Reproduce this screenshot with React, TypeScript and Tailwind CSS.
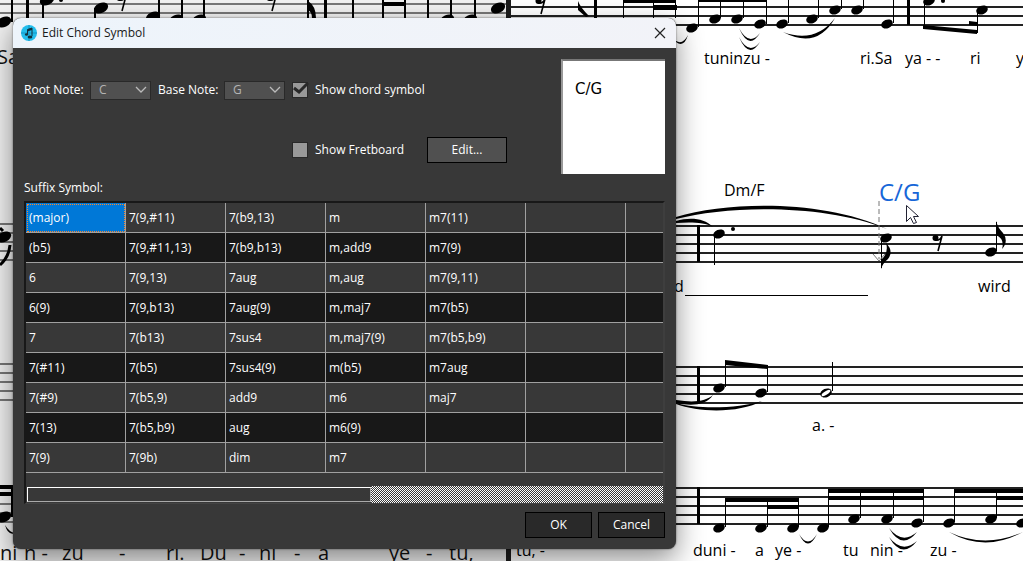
import type { ReactNode } from "react";

const SUFFIX_ROWS: string[][] = [
  ["(major)", "7(9,#11)", "7(b9,13)", "m", "m7(11)"],
  ["(b5)", "7(9,#11,13)", "7(b9,b13)", "m,add9", "m7(9)"],
  ["6", "7(9,13)", "7aug", "m,aug", "m7(9,11)"],
  ["6(9)", "7(9,b13)", "7aug(9)", "m,maj7", "m7(b5)"],
  ["7", "7(b13)", "7sus4", "m,maj7(9)", "m7(b5,b9)"],
  ["7(#11)", "7(b5)", "7sus4(9)", "m(b5)", "m7aug"],
  ["7(#9)", "7(b5,9)", "add9", "m6", "maj7"],
  ["7(13)", "7(b5,b9)", "aug", "m6(9)", ""],
  ["7(9)", "7(9b)", "dim", "m7", ""],
];

const NOTES = ["C", "D", "E", "F", "G", "A", "B"];

// [x, y] of each filled note head
const HEADS: [number, number][] = [
  [692, 28], [715, 19], [737, 19], [760, 24], [782, 24], [812, 19], [835, 10], [857, 10], [887, 24], [929, 1], [982, 10],
  [719, 234], [886, 238], [991, 252],
  [719, 388], [761, 393],
  [719, 528], [761, 528], [793, 528], [823, 528], [854, 519], [887, 519], [917, 523], [949, 523], [991, 519], [1022, 523],
];

const LARGE_HEADS: [number, number][] = [
  [4, 22], [47, 0], [101, 8], [153, 17], [176, 20], [199, 20], [447, 20], [470, 20], [498, 8], [4, 237], [4, 517],
];

// [x, y1, y2, width]
const STEMS: [number, number, number, number][] = [
  [698, 0, 27, 1], [720, 0, 18, 1], [743, 0, 18, 1], [766, 0, 24, 1], [788, 0, 23, 1], [818, 0, 18, 1], [841, 0, 9, 1], [863, 0, 9, 1], [893, 0, 23, 1],
  [907, 0, 25, 3], [924, 0, 28, 1], [977, 10, 33, 1],
  [697, 225, 262, 3], [714, 235, 265, 1], [881, 240, 268, 1], [996, 222, 251, 1],
  [697, 366, 403, 3], [725, 362, 387, 1], [767, 366, 392, 1], [832, 362, 391, 1],
  [697, 487, 524, 3], [725, 499, 527, 1], [767, 499, 527, 1], [798, 499, 527, 1], [828, 489, 527, 1], [860, 489, 518, 1], [893, 489, 518, 1], [923, 489, 522, 1], [954, 489, 522, 1], [996, 489, 518, 1],
  [11, 0, 22, 2], [26, 0, 18, 3], [42, 0, 18, 2], [94, 8, 18, 2], [158, 0, 18, 2], [181, 0, 18, 2], [203, 0, 18, 2], [307, 0, 18, 2], [324, 0, 18, 3],
  [352, 0, 18, 2], [382, 0, 18, 2], [404, 0, 18, 2], [427, 0, 18, 2], [450, 0, 18, 2], [474, 0, 18, 2], [594, 0, 18, 3], [623, 0, 18, 1], [653, 0, 18, 1], [675, 0, 18, 1],
  [11, 485, 517, 2],
];

const BEAMS = [
  "M383 2h23v4h-23z",
  "M623 0h52v3h-52zM653 5h24v5h-24z",
  "M698 0h68v2h-68z",
  "M923 25l54 5v4l-54-5zM969 21l8 1v4l-8-1z",
  "M725 360l43 5v4l-43-4z",
  "M725 498h74v4h-74zM767 505h32v4h-32z",
  "M828 489h96v4h-96zM828 496h96v4h-96z",
  "M954 489h69v4h-69zM996 496h27v4h-27z",
  "M0 485h12v4h-12zM0 492h12v4h-12z",
];

const SLURS = [
  "M676 41Q683 45 688 35Q684 48 676 42z",
  "M739 28Q749 47 760 33Q749 51 739 28z",
  "M739 37Q749 56 760 42Q749 60 739 37z",
  "M783 32Q815 44 835 18Q817 50 783 32z",
  "M676 217C730 201 825 200 887 229C825 204 730 205 676 219z",
  "M676 221C690 217 704 218 713 227C704 222 690 222 676 223z",
  "M676 400C695 403 706 401 713 395C706 406 690 406 676 403z",
  "M676 403C700 410 740 408 762 401C740 413 700 413 676 404z",
  "M799 534Q808 549 817 534Q808 553 799 534z",
  "M889 528Q902 545 917 532Q902 551 889 528z",
  "M889 537Q902 554 917 541Q902 560 889 537z",
  "M949 532Q985 549 1023 532Q985 553 949 532z",
  "M5 525Q9 532 15 533Q8 536 5 525z",
];

const LYRICS: [number, number, string][] = [
  [704, 64, "tuninzu -"], [860, 64, "ri.Sa"], [905, 64, "ya - -"], [970, 64, "ri"], [1016, 64, "y"],
  [674, 292, "d"], [978, 292, "wird"],
  [812, 431, "a. -"],
  [693, 556, "duni -"], [755, 556, "a"], [775, 556, "ye -"], [843, 556, "tu"], [870, 556, "nin -"], [930, 556, "zu -"],
  [516, 556, "tu, -"],
];

const LARGE_LYRICS: [number, number, string][] = [
  [-3, 64, "Sa"], [0, 560, "ni"], [24, 560, "n -"], [62, 560, "zu"], [119, 560, "-"], [166, 560, "ri."], [200, 560, "Du"],
  [239, 560, "-"], [259, 560, "ni"], [294, 560, "-"], [318, 560, "a"], [389, 560, "ye"], [426, 560, "-"], [449, 560, "tu,"],
];

function Staff({ x, y, width, color }: { x: number; y: number; width: number; color: string }) {
  return (
    <g fill={color}>
      {[0, 9, 18, 27, 36].map((offset) => (
        <rect key={offset} x={x} y={y + offset} width={width} height="2" />
      ))}
    </g>
  );
}

function EighthRest({ x, y }: { x: number; y: number }) {
  return (
    <g transform={`translate(${x} ${y})`}>
      <circle cx="2.5" cy="3" r="3" />
      <path d="M2 5q5 1 7-4l-4 15" fill="none" stroke="#000" strokeWidth="1.6" />
    </g>
  );
}

function Score() {
  return (
    <svg aria-hidden="true" className="absolute top-0 left-0" width="1023" height="561" viewBox="0 0 1023 561">
      <rect width="509" height="561" fill="#f1f1f1" />
      <Staff x={0} y={-24} width={508} color="#777777" />
      <Staff x={0} y={223} width={14} color="#777777" />
      <Staff x={0} y={363} width={14} color="#777777" />
      <Staff x={0} y={485} width={14} color="#777777" />
      <rect x="506" width="5" height="561" fill="#1c1c1c" />
      <Staff x={511} y={-12} width={512} color="#222222" />
      <Staff x={676} y={225} width={347} color="#222222" />
      <Staff x={676} y={366} width={347} color="#222222" />
      <Staff x={676} y={487} width={347} color="#222222" />

      {STEMS.map(([x, y1, y2, width]) => (
        <rect key={`${x}-${y1}`} x={x} y={y1} width={width} height={y2 - y1} />
      ))}
      {HEADS.map(([x, y]) => (
        <ellipse key={`${x}-${y}`} cx={x} cy={y} rx="6" ry="4.3" transform={`rotate(-22 ${x} ${y})`} />
      ))}
      {LARGE_HEADS.map(([x, y]) => (
        <ellipse key={`${x}-${y}`} cx={x} cy={y} rx="7.5" ry="5" transform={`rotate(-25 ${x} ${y})`} />
      ))}
      {[...BEAMS, ...SLURS].map((d) => (
        <path key={d} d={d} />
      ))}
      <ellipse cx="826" cy="393" rx="6" ry="4.3" transform="rotate(-22 826 393)" />
      <ellipse cx="826" cy="393" rx="5" ry="1.8" transform="rotate(-32 826 393)" fill="#fff" />
      <circle cx="733" cy="229" r="2" />
      <circle cx="943" cy="1" r="2" />
      <circle cx="61" cy="0" r="2" />

      {/* flags */}
      <path d="M881 269v-9q8-7 5-17q8 8 2 16q-5 4-7 10zM996 221q2 7 7 12q6 8-1 16q3-10-6-14z" />
      <path d="M578 1q2 6 11 15l-3 1-8-7zM308 1q8 5 8 17h-4q0-6-4-8z" />
      <path d="M0 228l3 3M10 245q-1 12-10 20" fill="none" stroke="#000" strokeWidth="3" />
      <EighthRest x={933} y={235} />
      <EighthRest x={117} y={-5} />
      <EighthRest x={267} y={-5} />
      <EighthRest x={536} y={-2} />

      {/* anchor line of the selected chord */}
      <path d="M879 201v58" stroke="#777" strokeDasharray="5 3" />
      <path d="M873 254l6 7l6-7" fill="none" stroke="#777" />
      <path d="M685 295.500h183" stroke="#000" />

      <g fontFamily="'Open Sans', 'Noto Sans', sans-serif" fontSize="16">
        {LYRICS.map(([x, y, text]) => (
          <text key={`${x}-${y}`} x={x} y={y}>{text}</text>
        ))}
        <text x="724" y="196">Dm/F</text>
        <text x="879" y="201" fontSize="24" fill="#1766d8">C/G</text>
      </g>
      <g fontFamily="'Open Sans', 'Noto Sans', sans-serif" fontSize="20" fill="#111">
        {LARGE_LYRICS.map(([x, y, text]) => (
          <text key={`${x}-${y}`} x={x} y={y}>{text}</text>
        ))}
      </g>
      <path d="M906.500 205.500v16l4-4l3 6l3-1l-3-6h5z" fill="#fff" stroke="#223" />
    </svg>
  );
}

function AppIcon() {
  return (
    <svg aria-hidden="true" className="size-4" viewBox="0 0 16 16">
      <circle cx="8" cy="8" r="8" fill="#22bdec" />
      <path d="M0 8h16M8 0v16" stroke="#1797c6" />
      <path d="M6.500 9v-4.500l4.500-1.500v8" fill="none" stroke="#12303c" strokeWidth="1" />
      <path d="M6.500 4.500l4.500-1.500v2l-4.500 1.500z" fill="#12303c" />
      <ellipse cx="5.500" cy="9.500" rx="1.600" ry="1.300" fill="#12303c" />
      <ellipse cx="9" cy="12" rx="2.400" ry="1.500" fill="#12303c" />
    </svg>
  );
}

function NoteSelect({ id, label, value }: { id: string; label: string; value: string }) {
  return (
    <>
      <label htmlFor={id} className="w-[66px] whitespace-nowrap">{label}</label>
      <div className="relative mr-[7px]">
        <select
          id={id}
          defaultValue={value}
          className="block h-[19px] w-[61px] appearance-none border border-[#292929] bg-[#505050] pl-2 text-xs leading-4 text-[#b4b4b4]"
        >
          {NOTES.map((note) => (
            <option key={note}>{note}</option>
          ))}
        </select>
        <svg aria-hidden="true" className="pointer-events-none absolute top-[5px] right-1" width="12" height="7" viewBox="0 0 12 7">
          <path d="M1 1l5 5l5-5" fill="none" stroke="#bbb" strokeWidth="1.300" />
        </svg>
      </div>
    </>
  );
}

function CheckRow({ label, checked = false }: { label: string; checked?: boolean }) {
  return (
    <label className="relative flex items-center gap-[7px] whitespace-nowrap">
      <input
        type="checkbox"
        defaultChecked={checked}
        className="peer size-4 appearance-none border border-[#292929] bg-[#999]"
      />
      <svg aria-hidden="true" className="pointer-events-none absolute top-0 left-0 hidden peer-checked:block" width="17" height="16" viewBox="0 0 17 16">
        <path d="M2 6l5 4l9-9" fill="none" stroke="#292929" strokeWidth="3" />
      </svg>
      {label}
    </label>
  );
}

function DialogButton({ children, className }: { children: ReactNode; className: string }) {
  return (
    <button type="button" className={`h-[26px] border border-black ${className}`}>
      {children}
    </button>
  );
}

export default function App() {
  return (
    <main className="relative min-h-screen overflow-hidden bg-white">
      <Score />

      <section
        role="dialog"
        aria-labelledby="dialog-title"
        className="absolute top-[18px] left-[13px] flex w-[663px] flex-col overflow-hidden rounded-lg bg-[#383838] font-['Open_Sans','Noto_Sans',sans-serif] text-xs text-white shadow-[0_10px_28px_rgba(0,0,0,0.45),0_0_2px_rgba(0,0,0,0.6)]"
      >
        <header className="flex h-[30px] items-center gap-[5px] bg-linear-to-r from-[#edf4fb] to-[#f2f3f8] px-2 text-[#191919]">
          <AppIcon />
          <h1 id="dialog-title">Edit Chord Symbol</h1>
          <button type="button" aria-label="Close" className="ml-auto flex size-4 items-center justify-center">
            <svg aria-hidden="true" width="12" height="12" viewBox="0 0 12 12">
              <path d="M1 1l10 10M11 1l-10 10" stroke="#222" strokeWidth="1.200" />
            </svg>
          </button>
        </header>

        <div className="flex flex-col px-[11px] pb-[11px]">
          <div className="flex justify-between pt-[11px]">
            <div className="flex flex-col pt-px">
              <div className="flex h-[60px] items-center">
                <NoteSelect id="root-note" label="Root Note:" value="C" />
                <NoteSelect id="base-note" label="Base Note:" value="G" />
                <CheckRow label="Show chord symbol" checked />
              </div>
              <div className="flex h-[60px] items-center pl-[268px]">
                <div className="w-[135px]">
                  <CheckRow label="Show Fretboard" />
                </div>
                <DialogButton className="w-20 bg-[#505050]">Edit...</DialogButton>
              </div>
            </div>
            <div className="h-[115px] w-[104px] border-t-2 border-l-2 border-t-[#777] border-l-[#999] bg-white px-3 py-[18px] font-['DejaVu_Sans',sans-serif] text-[15px] leading-5 text-black">
              C/G
            </div>
          </div>

          <h2 className="h-[21px] leading-4">Suffix Symbol:</h2>

          <div className="border-t-2 border-r-2 border-b border-l-2 border-t-[#181818] border-r-[#3e3e3e] border-b-[#444] border-l-[#181818]">
            <div className="overflow-hidden">
              <table className="w-[700px] table-fixed border-separate border-spacing-0">
                <tbody>
                  {SUFFIX_ROWS.map((row, rowIndex) => (
                    <tr key={row[0]} className="h-[30px] odd:bg-[#383838] even:bg-[#181818]">
                      {[...row, "", ""].map((suffix, column) => (
                        <td
                          key={column}
                          className={`border-r border-b border-[#a0a0a0] px-[3px] py-0 ${
                            rowIndex === 0 && column === 0
                              ? "bg-[#0078d7] outline-1 -outline-offset-2 outline-dotted outline-[#ff8728]"
                              : ""
                          }`}
                        >
                          {suffix}
                        </td>
                      ))}
                    </tr>
                  ))}
                </tbody>
              </table>
            </div>
            <div className="mt-[13px] flex h-[17px]">
              <div className="my-px ml-px w-[54%] border-t border-r border-b border-l border-t-white border-r-[#aaa] border-b-[#aaa] border-l-white" />
              <div className="flex-1 bg-[repeating-conic-gradient(#ffffff_0%_25%,#383838_0%_50%)] bg-size-[2px_2px]" />
            </div>
          </div>

          <div className="mt-2 flex justify-end gap-1.5">
            <DialogButton className="w-[67px] bg-[#292929]">OK</DialogButton>
            <DialogButton className="w-[67px] bg-[#292929]">Cancel</DialogButton>
          </div>
        </div>
      </section>
    </main>
  );
}
